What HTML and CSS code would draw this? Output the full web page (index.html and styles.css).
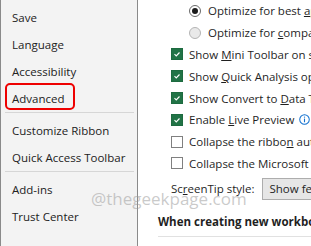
FILE: index.html
```html
<!DOCTYPE html>
<html lang="en">
<head>
<meta charset="UTF-8">
<meta name="viewport" content="width=device-width, initial-scale=1.0">
<title>Excel Options - Advanced</title>
<link rel="stylesheet" href="styles.css">
</head>
<body>
<div class="options">
  <aside class="sidebar">
    <div class="nav-item">Save</div>
    <div class="nav-item">Language</div>
    <div class="nav-item">Accessibility</div>
    <div class="nav-item active">Advanced</div>
    <div class="nav-sep"></div>
    <div class="nav-item">Customize Ribbon</div>
    <div class="nav-item">Quick Access Toolbar</div>
    <div class="nav-sep"></div>
    <div class="nav-item">Add-ins</div>
    <div class="nav-item">Trust Center</div>
  </aside>

  <main class="panel">
    <div class="opt sub">
      <span class="radio on"></span>
      <span>Optimize for best <u>a</u>ppearance</span>
    </div>
    <div class="opt sub">
      <span class="radio"></span>
      <span>Optimize for <u>c</u>ompatibility (application restart needed)</span>
    </div>
    <div class="opt">
      <span class="check on"><svg viewBox="0 0 12 12"><path d="M3 6.2 5.1 8.2 9 4.2" fill="none" stroke="#fff" stroke-width="1.4"/></svg></span>
      <span>Show <u>M</u>ini Toolbar on selection</span>
    </div>
    <div class="opt">
      <span class="check on"><svg viewBox="0 0 12 12"><path d="M3 6.2 5.1 8.2 9 4.2" fill="none" stroke="#fff" stroke-width="1.4"/></svg></span>
      <span>Show <u>Q</u>uick Analysis options on selection</span>
    </div>
    <div class="opt">
      <span class="check on"><svg viewBox="0 0 12 12"><path d="M3 6.2 5.1 8.2 9 4.2" fill="none" stroke="#fff" stroke-width="1.4"/></svg></span>
      <span>Show Convert to <u>D</u>ata Types when typing</span>
    </div>
    <div class="opt">
      <span class="check on"><svg viewBox="0 0 12 12"><path d="M3 6.2 5.1 8.2 9 4.2" fill="none" stroke="#fff" stroke-width="1.4"/></svg></span>
      <span>Enable <u>L</u>ive Preview</span>
      <svg class="info" viewBox="0 0 12 12"><circle cx="6" cy="6" r="5.2" fill="none" stroke="#1170cf" stroke-width="1.1"/><path d="M6 5v4" stroke="#1170cf" stroke-width="1.2"/><circle cx="6" cy="3.4" r="0.75" fill="#1170cf"/></svg>
    </div>
    <div class="opt">
      <span class="check"></span>
      <span>Collapse the ribbo<u>n</u> automatically</span>
    </div>
    <div class="opt">
      <span class="check"></span>
      <span>Collapse the Microsoft Search box by default</span>
    </div>
    <div class="tip-row">
      <span>Sc<u>r</u>eenTip style:</span>
      <span class="select">Show feature descriptions in ScreenTips</span>
    </div>
    <div class="section-title">When creating new workbooks</div>
  </main>

  <div class="watermark">@thegeekpage.com</div>
</div>
</body>
</html>
```

FILE: styles.css
```css
body {
  margin: 0;
  font-family: "Open Sans", "Noto Sans", sans-serif;
  font-size: 11.5px;
  color: #222;
  background: #fff;
}

.options {
  position: relative;
  display: flex;
  width: 311px;
  height: 246px;
  overflow: hidden;
}

/* left navigation */
.sidebar {
  width: 138px;
  flex-shrink: 0;
  box-sizing: border-box;
  display: flex;
  flex-direction: column;
  padding-top: 2px;
  background-color: #f3f3f3;
  border-left: 1px solid #8a8a8a;
  border-right: 1px solid #8a8a8a;
}

.nav-item {
  align-self: flex-start;
  height: 27px;
  line-height: 27px;
  margin-left: 4px;
  padding: 0 8px 0 5px;
  border: 2px solid transparent;
  box-sizing: border-box;
  border-radius: 5px;
  white-space: nowrap;
}

.nav-item.active {
  border-color: #ee0000;
}

.nav-sep {
  margin: 2px 3px 2px 4px;
  border-top: 1px solid #d6d6d6;
}

/* right panel */
.panel {
  flex: 1;
  min-width: 0;
  overflow: hidden;
  color: #1f1f1f;
}

.opt {
  display: flex;
  align-items: center;
  height: 21.8px;
  padding-left: 33px;
  white-space: nowrap;
}

.opt.sub {
  padding-left: 51px;
}

.radio {
  width: 12px;
  height: 12px;
  margin-right: 7px;
  flex-shrink: 0;
  box-sizing: border-box;
  border-radius: 50%;
  border: 1px solid #b4b4b4;
  background-color: #e9e9e9;
  position: relative;
}

.radio.on {
  border-color: #6a6a6a;
  background-color: #fff;
}

.radio.on::after {
  content: "";
  position: absolute;
  left: 2px;
  top: 2px;
  width: 6px;
  height: 6px;
  border-radius: 50%;
  background-color: #1b1b1b;
}

.check {
  width: 12px;
  height: 12px;
  margin-right: 6px;
  flex-shrink: 0;
  box-sizing: border-box;
  border: 1px solid #808080;
  background-color: #fff;
}

.check.on {
  border-color: #1d6b40;
  background-color: #217346;
}

.check svg {
  display: block;
  width: 10px;
  height: 10px;
}

.info {
  width: 11px;
  height: 11px;
  margin-left: 5px;
  flex-shrink: 0;
}

.tip-row {
  display: flex;
  align-items: center;
  margin-top: 3.6px;
  padding-left: 33px;
  white-space: nowrap;
}

.select {
  margin-left: 8px;
  height: 22px;
  line-height: 20px;
  padding: 0 6px;
  box-sizing: border-box;
  border: 1px solid #adadad;
  background-color: #e6e6e6;
}

.section-title {
  margin: 10px 0 0 20px;
  padding-bottom: 3px;
  line-height: 23px;
  font-weight: 700;
  white-space: nowrap;
  border-bottom: 1px solid #e1e1e1;
}

.watermark {
  position: absolute;
  left: 91px;
  top: 187px;
  font-size: 17px;
  color: rgba(150, 150, 150, 0.5);
  white-space: nowrap;
  pointer-events: none;
}
```
